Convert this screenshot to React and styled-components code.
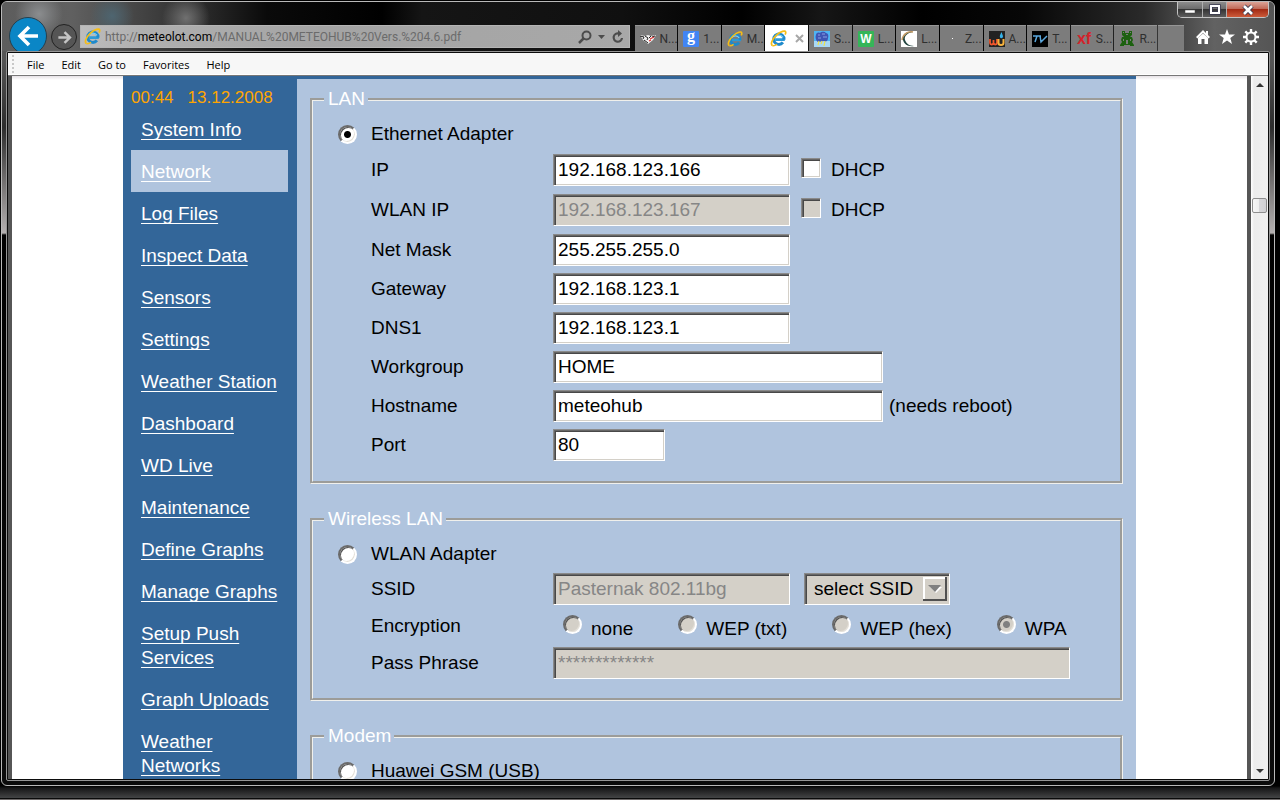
import React from "react";
import styled, { createGlobalStyle, css } from "styled-components";

const GlobalStyle = createGlobalStyle`
    * {
        box-sizing: border-box;
    }

    body {
        margin: 0;
        background: #000;
        font-family: "Liberation Sans", Arial, sans-serif;
    }

    button {
        margin: 0;
        padding: 0;
        border: 0;
        background: none;
        font: inherit;
    }
`;

const navItems = [
    "System Info", "Network", "Log Files", "Inspect Data", "Sensors", "Settings",
    "Weather Station", "Dashboard", "WD Live", "Maintenance", "Define Graphs",
    "Manage Graphs", "Setup Push Services", "Graph Uploads", "Weather Networks",
];

const menus = ["File", "Edit", "Go to", "Favorites", "Help"];

/* window frame */

const Desktop = styled.div`
    height: 100vh;
    padding: 1px 5px 14px 1px;
    background: linear-gradient(#000 0, #000 calc(100% - 14px), #161617 calc(100% - 12px), #434445 calc(100% - 2px), #0a0a0a calc(100% - 2px), #0a0a0a calc(100% - 1px), #6d6969 calc(100% - 1px));
    overflow: hidden;
`;

const Frame = styled.div`
    height: 100%;
    display: flex;
    flex-direction: column;
    border: 1px solid #b9b9b9;
    border-radius: 6px;
    overflow: hidden;
    background: linear-gradient(#5a5a5a 0, #555 60px, #2c2c2c 125px, #b4b0b0 231px, #000 233px, #0b0b0b 100%);
`;

const TitleBar = styled.header`
    flex: none;
    background:
        radial-gradient(circle at 37px 12px, #8b8d8f 0, transparent 24px),
        radial-gradient(circle at 110px 14px, #4e6570 0, transparent 22px),
        radial-gradient(circle at 184px 16px, #707070 0, transparent 24px),
        linear-gradient(90deg, #5d5d5d 0, #606060 70px, #3f3f3f 150px, #2b2b2b 200px, #0a0a0a 265px, #000 380px, #151515 420px, #101010 620px, #000 740px, #161616 820px, #000 920px, #070707 calc(100% - 250px), #2a2a2a calc(100% - 130px), #626262 calc(100% - 60px), #555 100%);
`;

const TitleRow = styled.div`
    display: flex;
    justify-content: flex-end;
    height: 22px;
    padding-right: 5px;
`;

const Controls = styled.div`
    display: flex;
    height: 16px;
    border: 1px solid #c4c4c4;
    border-top: 0;
    border-radius: 0 0 5px 5px;
    overflow: hidden;
`;

const ControlButton = styled.button`
    width: ${(p) => (p.$close ? 42 : 24)}px;
    display: flex;
    align-items: center;
    justify-content: center;
    background: ${(p) => p.$close
        ? "linear-gradient(#dba396 0, #c06a58 45%, #a32b14 50%, #cc5b3a 100%)"
        : "linear-gradient(#8c8c8c 0, #6c6c6c 45%, #343434 50%, #5c5c5c 100%)"};
    & + & {
        border-left: 1px solid #b0b0b0;
    }
`;

const ToolRow = styled.div`
    display: flex;
    align-items: flex-start;
    height: 27px;
    padding-left: 7px;
`;

const NavButton = styled.button`
    flex: none;
    width: ${(p) => p.$size}px;
    height: ${(p) => p.$size}px;
    margin-top: ${(p) => (p.$main ? -7 : 0)}px;
    margin-right: ${(p) => (p.$main ? 4 : 3)}px;
    display: flex;
    align-items: center;
    justify-content: center;
    border: 1px solid ${(p) => (p.$main ? "#26404e" : "#222")};
    border-radius: 50%;
    background: ${(p) => (p.$main ? "#0a86c6" : "#555")};
`;

const Address = styled.div`
    flex: 1;
    min-width: 0;
    height: 23px;
    margin: 1px 5px 0 0;
    padding: 0 4px 0 3px;
    display: flex;
    align-items: center;
    border: 1px solid #b5b5b5;
    background: linear-gradient(90deg, #bdbdbd 0, #b0b0b0 60px, #a4a4a4 240px, #a8a8a8 100%);
    font-family: Roboto, "Open Sans", sans-serif;
    font-size: 12px;
    color: #6b6b6b;
`;

const Url = styled.div`
    flex: 1;
    min-width: 0;
    margin-left: 4px;
    overflow: hidden;
    white-space: nowrap;

    strong {
        font-weight: 400;
        color: #000;
    }
`;

const AddressButton = styled.button`
    display: flex;
    margin-left: 6px;
`;

const Tabs = styled.nav`
    flex: 1 1 9px;
    min-width: 0;
    display: flex;
    gap: 1px;
    padding-top: 1px;
`;

const Tab = styled.button`
    flex: ${(p) => (p.$blank ? "0 0 26px" : "1 1 0")};
    min-width: 0;
    height: 26px;
    padding-left: 5px;
    display: flex;
    align-items: center;
    gap: 4px;
    overflow: hidden;
    background: ${(p) => (p.$active ? "#fff" : "#7c7c7c")};
    border-top: 1px solid ${(p) => (p.$active ? "#fff" : "#969696")};
    font-family: Roboto, "Open Sans", sans-serif;
    font-size: 12px;
    color: #2f2f2f;
    white-space: nowrap;

    svg {
        flex: none;
    }
`;

const Tools = styled.div`
    flex: none;
    width: 90px;
    padding: 5px 0 0 11px;
    display: flex;
    gap: 8px;
`;

const Client = styled.div`
    position: relative;
    flex: 1;
    min-height: 0;
    margin: 0 4px 4px;
    border: 1px solid #969696;
    border-radius: 2px;
    padding: 1px;
    background: #0c0c0c;
    display: flex;
    flex-direction: column;
`;

const MenuBar = styled.div`
    flex: none;
    height: 23px;
    padding: 0 4px;
    display: flex;
    align-items: center;
    gap: 17px;
    background: #f7f7f7;
    border-bottom: 1px solid #777;
    box-shadow: inset 0 -1px #fff;
    font-family: "Open Sans", sans-serif;
    font-size: 11px;
    color: #0d0018;
`;

const Grip = styled.span`
    width: 2px;
    height: 18px;
    margin-right: -4px;
    background: repeating-linear-gradient(#c8c8c8 0, #c8c8c8 2px, transparent 2px, transparent 4px);
`;

const Viewport = styled.div`
    flex: 1;
    min-height: 0;
    display: flex;
    overflow: hidden;
`;

const Paper = styled.div`
    flex: 1;
    min-width: 0;
    border: 0 solid #565656;
    border-width: 0 4px;
    background: linear-gradient(#e6e2e6 0, #fff 4px);
    overflow: hidden;
`;

const Scrollbar = styled.div`
    flex: none;
    width: 17px;
    display: flex;
    flex-direction: column;
    background: linear-gradient(90deg, #fff 0, #ececec 3px, #f0f0f0 100%);
`;

const ScrollButton = styled.button`
    height: 17px;
    display: flex;
    align-items: center;
    justify-content: center;
`;

const Track = styled.div`
    flex: ${(p) => p.$share};
`;

const Thumb = styled.div`
    height: 15px;
    margin: 0 1px;
    border: 1px solid #8e8e8e;
    border-radius: 2px;
    background: linear-gradient(90deg, #f6f6f6 0, #eee 45%, #d6d6d9 50%, #cfcfd2 100%);
`;

/* the web page */

const Sheet = styled.div`
    max-width: 1013px;
    margin: 0 auto;
    display: flex;
    background: #b0c4de;
    font-size: 19px;
    line-height: 22px;
`;

const Sidebar = styled.nav`
    flex: none;
    width: 174px;
    padding: 11px 9px 0 8px;
    background: #336699;
    color: #fff;
`;

const Clock = styled.div`
    display: flex;
    gap: 14px;
    height: 21px;
    font-size: 17px;
    color: #ffa500;
`;

const NavLink = styled.a`
    display: block;
    padding: 10px 2px 8px 10px;
    line-height: 24px;
    color: #fff;
    text-decoration: underline;
    text-decoration-thickness: 1px;
    text-underline-offset: 3px;
    text-decoration-skip-ink: none;
    background: ${(p) => (p.$current ? "#b0c4de" : "transparent")};
`;

const Main = styled.main`
    flex: 1;
    min-width: 0;
    padding: 9px 13px 0;
    border-top: 3px solid #336699;
`;

const Group = styled.fieldset`
    min-width: 0;
    margin: 0 0 24px;
    padding: 7px 11px 17px;
    border: 3px groove #f0f0ec;
`;

const Legend = styled.legend`
    padding: 0 3px 0 4px;
    color: #fff;
`;

const Row = styled.div`
    display: grid;
    grid-template-columns: 182px 1fr;
    align-items: center;
    height: ${(p) => p.$height}px;
    padding-left: 47px;
`;

const AdapterRow = styled.div`
    display: flex;
    align-items: center;
    gap: 14px;
    height: 33px;
    padding-left: 14px;
`;

const Cell = styled.div`
    display: flex;
    align-items: center;
    gap: ${(p) => p.$gap || 0}px;
`;

const sunken = css`
    border: 1px solid;
    border-color: #8a8a8a #fff #fff #8a8a8a;
    border-radius: 0;
    box-shadow: inset 1px 1px #666, inset 2px 2px #484848, inset -1px -1px #d4d0c8;
    background-color: #fff;
    color: #000;

    &:disabled {
        background-color: #d4d0c8;
        color: #868686;
    }
`;

const Field = styled.input`
    ${sunken}
    width: ${(p) => p.$width}px;
    height: 32px;
    padding: 0 4px;
    font: inherit;
`;

const CheckBox = styled.input`
    ${sunken}
    appearance: none;
    width: 20px;
    height: 20px;
    margin: 0 0 4px;
`;

const dot = (color) => `radial-gradient(circle, ${color} 3px, transparent 4px)`;

const Radio = styled.input`
    appearance: none;
    flex: none;
    width: 19px;
    height: 19px;
    margin: ${(p) => (p.$raised ? "0 0 2px" : "2px 0 0")};
    border: 2px solid;
    border-color: #6a6a6a #fff #fff #6a6a6a;
    border-radius: 50%;
    box-shadow: inset 1px 1px #555, inset -1px -1px #e4e0d8;
    background-color: ${(p) => (p.$dim ? "#d4d0c8" : "#fff")};

    &:checked {
        background-image: ${(p) => dot(p.$dim ? "#808080" : "#000")};
    }
`;

const Options = styled.div`
    display: flex;
    gap: 45px;
    padding-left: 10px;
`;

const Option = styled.label`
    display: flex;
    align-items: center;
    gap: ${(p) => p.$gap || 9}px;
    white-space: nowrap;
`;

const OptionText = styled.span`
    padding-top: 6px;
`;

const SelectBox = styled.div`
    position: relative;
    display: flex;

    svg {
        position: absolute;
        top: 4px;
        right: 3px;
        pointer-events: none;
    }
`;

const Select = styled.select`
    ${sunken}
    appearance: none;
    width: 146px;
    height: 32px;
    padding: 0 28px 0 9px;
    background-color: #d4d0c8;
    font: inherit;
`;

/* icons */

function IELogo({ size = 17 }) {
    return (
        <svg width={size} height={size} viewBox="0 0 17 17" fill="none">
            <path d="M14.8 9.6H5.2" stroke="#2d9bd8" strokeWidth="2.6" />
            <path d="M14 9.6A5.2 5.2 0 1 0 12.9 12.4" stroke="#1f8acb" strokeWidth="3" />
            <path d="M5 7.2A4.8 4.8 0 0 1 13 7.4" stroke="#7fd0f4" strokeWidth="1.2" />
            <path d="M2.7 15.6C0.2 14.8 1.6 9.6 6.2 5.3C10.7 1.1 15.4 0 15.7 2.2C15.8 2.9 15.6 3.8 15.1 4.7" stroke="#f5bd16" strokeWidth="1.7" />
            <path d="M2.7 15.6C4 16 5.6 15.2 7 14.2" stroke="#f5bd16" strokeWidth="1.4" />
        </svg>
    );
}

function Arrow({ size, flip, color }) {
    return (
        <svg width={size} height={size} viewBox="0 0 22 22" fill="none" stroke={color} strokeWidth="3.6">
            {flip
                ? <path d="M2 11H18M11 3L19 11L11 19" />
                : <path d="M21 11H4M12 2L3 11L12 20" />}
        </svg>
    );
}

function HandshakeIcon() {
    return (
        <svg width="16" height="16" viewBox="0 0 16 16">
            <path d="M0 4L5 5L8 4L11 5L16 4L13 9L8 13L3 9Z" fill="#f0f0f0" />
            <path d="M0 5L4 6L3 8M5 5L8 7L7 9M4 9L8 12M11 5L9 7M15 5L12 6" stroke="#222" strokeWidth="1" fill="none" />
            <path d="M10 8L14 6M9 10L11 9" stroke="#d33" strokeWidth="1.2" />
        </svg>
    );
}

function Badge({ color, label, fill = "#fff", font = "Liberation Sans", size = 12, base = 12 }) {
    return (
        <svg width="16" height="16" viewBox="0 0 16 16">
            <rect width="16" height="16" rx="1" fill={color} />
            <text x="8" y={base} textAnchor="middle" fontFamily={font} fontSize={size} fontWeight="700" fill={fill}>{label}</text>
        </svg>
    );
}

function StormIcon() {
    return (
        <svg width="16" height="16" viewBox="0 0 16 16">
            <rect width="16" height="16" fill="#4fb4f4" />
            <rect y="10" width="16" height="6" fill="#a8d8f6" />
            <path d="M2 4C2 2 4 1 6 2C8 0 11 1 12 2C14 2 15 5 14 7C14 10 12 11 10 10L4 11C2 10 1 6 2 4Z" fill="#3f55b4" />
            <path d="M4 4H6M8 3H11M4 7H7M9 6H13" stroke="#8ba0e4" />
            <path d="M5 10L4 14M8 10L7 13M11 10L10 15" stroke="#f0e04a" strokeWidth="1.2" />
        </svg>
    );
}

function CrescentIcon() {
    return (
        <svg width="16" height="16" viewBox="0 0 16 16">
            <rect width="16" height="16" fill="#fff" />
            <path d="M12 1C4 0 1 5 2 9C3 13 7 16 13 15C8 15 5 12 4 9C3 5 6 2 12 1Z" fill="#21443f" />
            <path d="M12 1C7 0 2 3 1 9" stroke="#c39a64" strokeWidth="1.6" fill="none" />
        </svg>
    );
}

function DotIcon() {
    return (
        <svg width="16" height="16" viewBox="0 0 16 16">
            <rect x="7" y="7" width="1" height="1" fill="#fff" />
        </svg>
    );
}

function UndergroundIcon() {
    return (
        <svg width="16" height="16" viewBox="0 0 16 16" fill="none">
            <rect width="16" height="16" fill="#222" />
            <path d="M1 8V12C1 14 4 14 4.500 12V9V12C5 14 8 14 8 12V8" stroke="#f0562c" strokeWidth="1.800" />
            <path d="M9.500 8V12C9.500 14.500 14.500 14.500 14.500 12V8" stroke="#f7b23c" strokeWidth="2" />
            <path d="M12.500 1C11 4 10.500 5 11 6.500C12 8 14 7 14 5.500C14 4 13 3 12.500 1Z" fill="#35b2e8" />
        </svg>
    );
}

function TvIcon() {
    return (
        <svg width="16" height="16" viewBox="0 0 16 16" fill="none">
            <rect width="16" height="16" fill="#000" />
            <path d="M1 5H9M5 5L3 11M8 5L9 11L15 5" stroke="#5aa7dd" strokeWidth="1.500" />
        </svg>
    );
}

function FrogIcon() {
    return (
        <svg width="16" height="16" viewBox="0 0 16 16">
            <path d="M3 0H6V2H10V0H13V4L11 6H13L14 9L13 11L15 14V15H11V14H5V15H1V14L3 11L2 9L3 6H5L3 4Z" fill="#1c6110" />
            <path d="M4 1H5V2H4ZM11 1H12V2H11ZM7 3H9V4H7ZM7 9H9V13H7ZM4 8H5V10H4ZM11 8H12V10H11Z" fill="#7c7c7c" />
        </svg>
    );
}

const tabs = [
    { icon: <HandshakeIcon />, text: "N..." },
    { icon: <Badge color="#4285f4" label="g" font="Liberation Serif" size={16} base={10} />, text: "1..." },
    { icon: <IELogo size={16} />, text: "M..." },
    { icon: <IELogo />, active: true },
    { icon: <StormIcon />, text: "S..." },
    { icon: <Badge color="#35b558" label="W" />, text: "L..." },
    { icon: <CrescentIcon />, text: "L..." },
    { icon: <DotIcon />, text: "Z..." },
    { icon: <UndergroundIcon />, text: "A..." },
    { icon: <TvIcon />, text: "T..." },
    { icon: <Badge color="none" label="xf" fill="#d3232b" size={16} base={13} />, text: "S..." },
    { icon: <FrogIcon />, text: "R..." },
];

function WindowControls() {
    return (
        <Controls>
            <ControlButton aria-label="Minimize">
                <svg width="12" height="12"><rect x="1" y="6" width="10" height="3" fill="#fff" stroke="#444" strokeWidth=".5" /></svg>
            </ControlButton>
            <ControlButton aria-label="Maximize">
                <svg width="12" height="12" fill="none">
                    <rect x="2" y="2" width="8" height="7" stroke="#3a3a50" strokeWidth="3.500" />
                    <rect x="2" y="2" width="8" height="7" stroke="#fff" strokeWidth="2" />
                </svg>
            </ControlButton>
            <ControlButton $close aria-label="Close">
                <svg width="12" height="12" fill="none">
                    <path d="M2 2L10 10M10 2L2 10" stroke="#3a3a50" strokeWidth="4.500" />
                    <path d="M2 2L10 10M10 2L2 10" stroke="#fff" strokeWidth="2.600" />
                </svg>
            </ControlButton>
        </Controls>
    );
}

function AddressBar() {
    return (
        <Address>
            <IELogo />
            <Url>http://<strong>meteolot.com</strong>/MANUAL%20METEOHUB%20Vers.%204.6.pdf</Url>
            <AddressButton aria-label="Search">
                <svg width="14" height="14" fill="none" stroke="#4c4c4c">
                    <circle cx="8.500" cy="5.500" r="4" strokeWidth="2" />
                    <path d="M5.500 8.500L1 13" strokeWidth="2.500" />
                </svg>
            </AddressButton>
            <AddressButton aria-label="Show address list">
                <svg width="7" height="14"><path d="M0 5H7L3.500 9Z" fill="#4c4c4c" /></svg>
            </AddressButton>
            <AddressButton aria-label="Refresh">
                <svg width="14" height="14" fill="none">
                    <path d="M8 3.500A4.200 4.200 0 1 0 11 8" stroke="#4c4c4c" strokeWidth="2.200" />
                    <path d="M7 0L11 3.500L7 7Z" fill="#4c4c4c" />
                </svg>
            </AddressButton>
        </Address>
    );
}

function BrowserTabs() {
    return (
        <Tabs>
            {
                tabs.map((t, i) => (
                    <Tab key={i} $active={t.active}>
                        {t.icon}
                        {t.active
                            ? <CloseMark />
                            : <span>{t.text}</span>}
                    </Tab>
                ))
            }
            <Tab $blank aria-label="New tab" />
        </Tabs>
    );
}

function CloseMark() {
    return (
        <svg width="14" height="9">
            <path d="M5 1L12 8M12 1L5 8" stroke="#a8a8a8" strokeWidth="2" />
        </svg>
    );
}

function BrowserTools() {
    return (
        <Tools>
            <button aria-label="Home">
                <svg width="16" height="16" fill="#fff">
                    <path d="M8 1L1 8L2.500 9.500L8 4L13.500 9.500L15 8L13 6V2H11V4Z" />
                    <path d="M3 9L8 4.500L13 9V15H9.500V10H6.500V15H3Z" />
                </svg>
            </button>
            <button aria-label="Favorites">
                <svg width="16" height="16" fill="#fff">
                    <path d="M8 0L10 5.500H16L11.300 9L13 15L8 11.500L3 15L4.700 9L0 5.500H6Z" />
                </svg>
            </button>
            <button aria-label="Tools">
                <svg width="16" height="16" fill="none" stroke="#fff">
                    <circle cx="8" cy="8" r="4.500" strokeWidth="2" />
                    <path d="M8 0V3M8 13V16M0 8H3M13 8H16M2.300 2.300L4.500 4.500M11.500 11.500L13.700 13.700M2.300 13.700L4.500 11.500M11.500 4.500L13.700 2.300" strokeWidth="2.400" />
                </svg>
            </button>
        </Tools>
    );
}

function TextRow({ id, label, value, width, height = 39, disabled, gap, children }) {
    return (
        <Row $height={height}>
            <label htmlFor={id}>{label}</label>
            <Cell $gap={gap}>
                <Field id={id} $width={width} defaultValue={value} disabled={disabled} />
                {children}
            </Cell>
        </Row>
    );
}

function Dhcp({ disabled }) {
    return (
        <Option $gap={10}>
            <CheckBox type="checkbox" disabled={disabled} />
            DHCP
        </Option>
    );
}

function Adapter({ id, label, checked }) {
    return (
        <AdapterRow>
            <Radio type="radio" name="adapter" id={id} defaultChecked={checked} />
            <label htmlFor={id}>{label}</label>
        </AdapterRow>
    );
}

function LanGroup() {
    return (
        <Group>
            <Legend>LAN</Legend>
            <Adapter id="ethernet" label="Ethernet Adapter" checked />
            <TextRow id="ip" label="IP" value="192.168.123.166" width={237} height={40} gap={11}>
                <Dhcp />
            </TextRow>
            <TextRow id="wlan-ip" label="WLAN IP" value="192.168.123.167" width={237} height={40} gap={11} disabled>
                <Dhcp disabled />
            </TextRow>
            <TextRow id="mask" label="Net Mask" value="255.255.255.0" width={237} />
            <TextRow id="gateway" label="Gateway" value="192.168.123.1" width={237} />
            <TextRow id="dns" label="DNS1" value="192.168.123.1" width={237} />
            <TextRow id="workgroup" label="Workgroup" value="HOME" width={330} />
            <TextRow id="hostname" label="Hostname" value="meteohub" width={330} gap={6}>
                <span>(needs reboot)</span>
            </TextRow>
            <TextRow id="port" label="Port" value="80" width={112} />
        </Group>
    );
}

function WirelessGroup() {
    return (
        <Group>
            <Legend>Wireless LAN</Legend>
            <Adapter id="wlan" label="WLAN Adapter" />
            <TextRow id="ssid" label="SSID" value="Pasternak 802.11bg" width={237} height={37} gap={14} disabled>
                <SelectBox>
                    <Select aria-label="select SSID">
                        <option>select SSID</option>
                    </Select>
                    <svg width="24" height="24" fill="none">
                        <rect width="24" height="24" fill="#d4d0c8" />
                        <path d="M1 23V1H23" stroke="#fff" strokeWidth="2" />
                        <path d="M0 23H23V0" stroke="#505050" strokeWidth="2" />
                        <path d="M7 10H19L13 16Z" fill="#fff" />
                        <path d="M5 8H18L12 15Z" fill="#808080" />
                    </svg>
                </SelectBox>
            </TextRow>
            <Row $height={37}>
                <span>Encryption</span>
                <Options>
                    {
                        ["none", "WEP (txt)", "WEP (hex)", "WPA"].map((name) => (
                            <Option key={name}>
                                <Radio type="radio" name="encryption" $dim $raised defaultChecked={name === "WPA"} />
                                <OptionText>{name}</OptionText>
                            </Option>
                        ))
                    }
                </Options>
            </Row>
            <TextRow id="pass" label="Pass Phrase" value="*************" width={517} height={37} disabled />
        </Group>
    );
}

function ModemGroup() {
    return (
        <Group>
            <Legend>Modem</Legend>
            <Adapter id="huawei" label="Huawei GSM (USB)" />
        </Group>
    );
}

export default function App() {
    return (
        <Desktop>
            <GlobalStyle />
            <Frame>
                <TitleBar>
                    <TitleRow>
                        <WindowControls />
                    </TitleRow>
                    <ToolRow>
                        <NavButton $main $size={38} aria-label="Back"><Arrow size={22} color="#fff" /></NavButton>
                        <NavButton $size={26} aria-label="Forward"><Arrow size={15} flip color="#c4c4c4" /></NavButton>
                        <AddressBar />
                        <BrowserTabs />
                        <BrowserTools />
                    </ToolRow>
                </TitleBar>
                <Client>
                    <MenuBar>
                        <Grip />
                        {menus.map((m) => <button key={m}>{m}</button>)}
                    </MenuBar>
                    <Viewport>
                        <Paper>
                            <Sheet>
                                <Sidebar>
                                    <Clock><span>00:44</span><span>13.12.2008</span></Clock>
                                    {navItems.map((n) => <NavLink key={n} href="#" $current={n === "Network"}>{n}</NavLink>)}
                                </Sidebar>
                                <Main>
                                    <LanGroup />
                                    <WirelessGroup />
                                    <ModemGroup />
                                </Main>
                            </Sheet>
                        </Paper>
                        <Scrollbar>
                            <ScrollButton aria-label="Scroll up">
                                <svg width="8" height="4"><path d="M0 4L4 0L8 4Z" fill="#333" /></svg>
                            </ScrollButton>
                            <Track $share={105} />
                            <Thumb />
                            <Track $share={549} />
                            <ScrollButton aria-label="Scroll down">
                                <svg width="8" height="4"><path d="M0 0H8L4 4Z" fill="#333" /></svg>
                            </ScrollButton>
                        </Scrollbar>
                    </Viewport>
                </Client>
            </Frame>
        </Desktop>
    );
}
